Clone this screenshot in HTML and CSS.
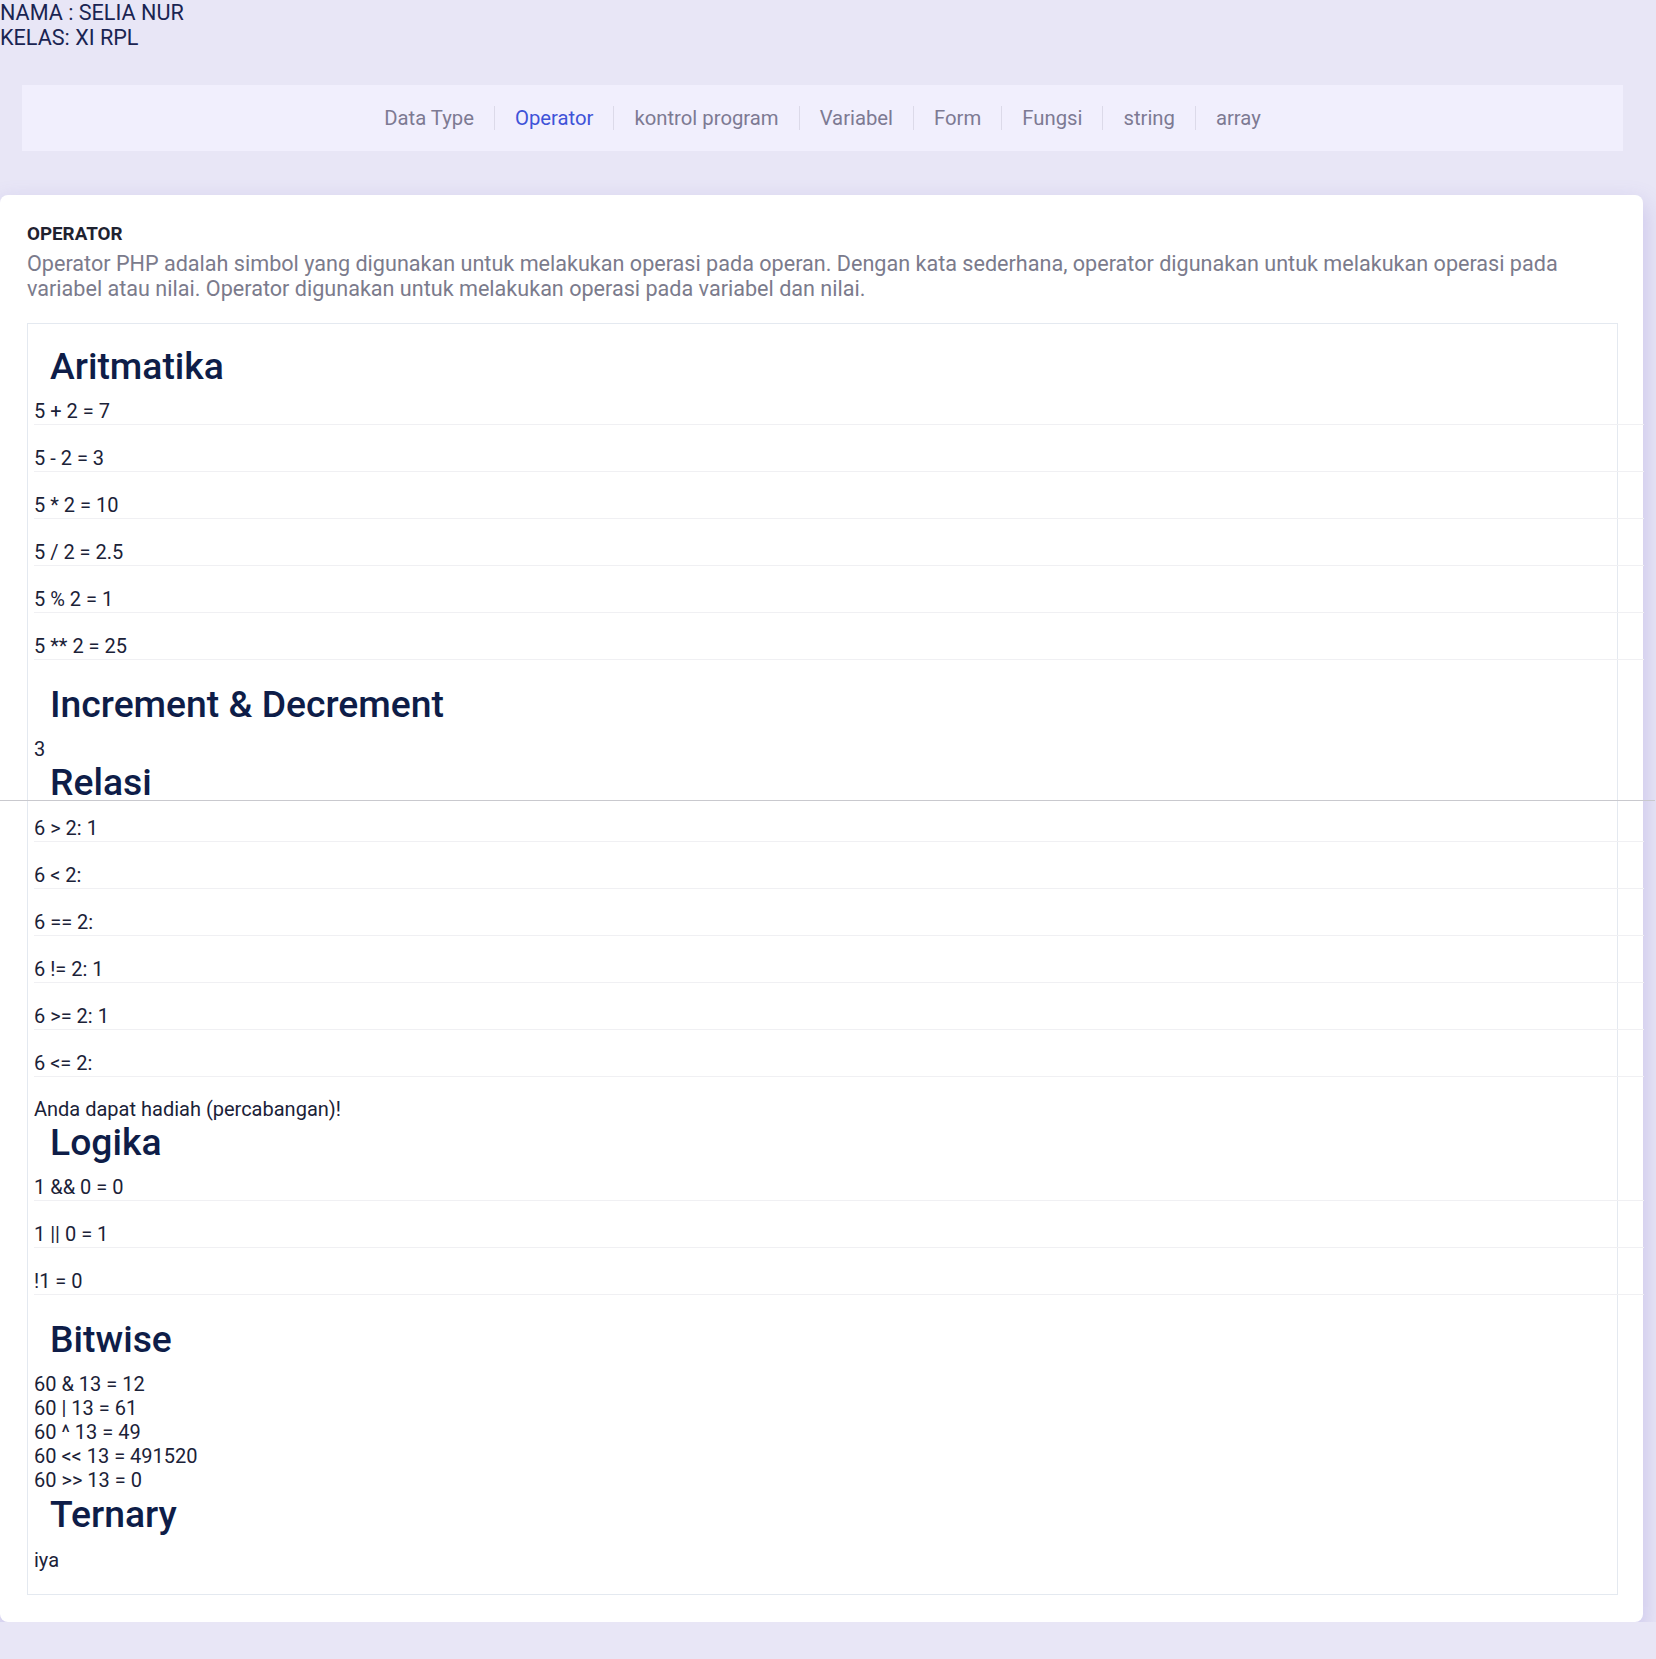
FILE: index.html
```html
<!DOCTYPE html>
<html lang="id">
<head>
<meta charset="utf-8">
<title>Operator</title>
<link rel="stylesheet" href="styles.css">
</head>
<body>
<div class="who">NAMA : SELIA NUR<br>KELAS: XI RPL</div>
<div class="page">
  <header class="header">
    <nav class="nav">
      <a class="nav-item">Data Type</a>
      <a class="nav-item active">Operator</a>
      <a class="nav-item">kontrol program</a>
      <a class="nav-item">Variabel</a>
      <a class="nav-item">Form</a>
      <a class="nav-item">Fungsi</a>
      <a class="nav-item">string</a>
      <a class="nav-item">array</a>
    </nav>
  </header>
  <main class="card">
    <h4 class="title">OPERATOR</h4>
    <p class="desc">Operator PHP adalah simbol yang digunakan untuk melakukan operasi pada operan. Dengan kata sederhana, operator digunakan untuk melakukan operasi pada variabel atau nilai. Operator digunakan untuk melakukan operasi pada variabel dan nilai.</p>
    <div class="box">
      <h2 class="sec">Aritmatika</h2>
      <div class="rows">
        <div class="row">5 + 2 = 7</div>
        <div class="row">5 - 2 = 3</div>
        <div class="row">5 * 2 = 10</div>
        <div class="row">5 / 2 = 2.5</div>
        <div class="row">5 % 2 = 1</div>
        <div class="row">5 ** 2 = 25</div>
      </div>
      <h2 class="sec">Increment &amp; Decrement</h2>
      <div class="text">3</div>
      <h2 class="sec">Relasi</h2>
      <div class="rule"></div>
      <div class="rows">
        <div class="row">6 &gt; 2: 1</div>
        <div class="row">6 &lt; 2:</div>
        <div class="row">6 == 2:</div>
        <div class="row">6 != 2: 1</div>
        <div class="row">6 &gt;= 2: 1</div>
        <div class="row">6 &lt;= 2:</div>
      </div>
      <div class="text after-rows">Anda dapat hadiah (percabangan)!</div>
      <h2 class="sec">Logika</h2>
      <div class="rows">
        <div class="row">1 &amp;&amp; 0 = 0</div>
        <div class="row">1 || 0 = 1</div>
        <div class="row">!1 = 0</div>
      </div>
      <h2 class="sec">Bitwise</h2>
      <div class="text">60 &amp; 13 = 12<br>60 | 13 = 61<br>60 ^ 13 = 49<br>60 &lt;&lt; 13 = 491520<br>60 &gt;&gt; 13 = 0</div>
      <h2 class="sec late">Ternary</h2>
      <div class="text last">iya</div>
    </div>
  </main>
</div>
</body>
</html>
```

FILE: styles.css
```css
html, body {
  margin: 0;
  padding: 0;
}
body {
  background: #e8e6f6;
  font-family: Roboto, "Liberation Sans", Arial, sans-serif;
  font-size: 20px;
  line-height: 24px;
  color: #1b2238;
  overflow: hidden;
}
.who {
  font-size: 21.6px;
  line-height: 25px;
  color: #1a2452;
}
.page {
  width: 1643px;
}
.header {
  padding-top: 35px;
}
.nav {
  margin: 0 20px 0 22px;
  height: 66px;
  background: #f1effd;
  display: flex;
  align-items: center;
  justify-content: center;
}
.nav-item {
  font-size: 20.3px;
  line-height: 24px;
  color: #7d7a93;
  padding: 0 20px;
  border-left: 1px solid #dcdae9;
}
.nav-item:first-child {
  border-left: 0;
}
.nav-item.active {
  color: #3f53d8;
}
.card {
  margin-top: 44px;
  background: #ffffff;
  border-radius: 8px;
  padding: 31px 25px 27px 27px;
  box-shadow: 0 10px 22px 3px rgba(110, 90, 200, 0.22);
}
.title {
  margin: 0;
  font-size: 18.8px;
  line-height: 16px;
  font-weight: 700;
  color: #1f2230;
}
.desc {
  margin: 9px 0 22px;
  font-size: 21.6px;
  line-height: 25px;
  color: #7b7b8c;
}
.box {
  border: 1px solid #e4e9f0;
  padding: 21px 5px 22px 6px;
}
.sec {
  margin: 0;
  padding-left: 16px;
  font-size: 37.3px;
  line-height: 42px;
  font-weight: 500;
  color: #0e1d48;
}
.sec.late {
  margin-top: 1px;
}
.rows {
  margin: 12px -32px 20px 0;
}
.rows + .sec {
  margin-top: 23px;
}
.row {
  padding-bottom: 1px;
  border-bottom: 1px solid #f0f0f3;
}
.row + .row {
  margin-top: 21px;
}
.text {
  margin-top: 12px;
}
.text.last {
  margin-top: 13px;
}
.text.after-rows {
  margin-top: 0;
}
.rule {
  height: 0;
  width: 1656px;
  border-top: 1px solid #c9c9ce;
  margin: -3px 0 15px -35px;
}
.rule + .rows {
  margin-top: 0;
}
```
